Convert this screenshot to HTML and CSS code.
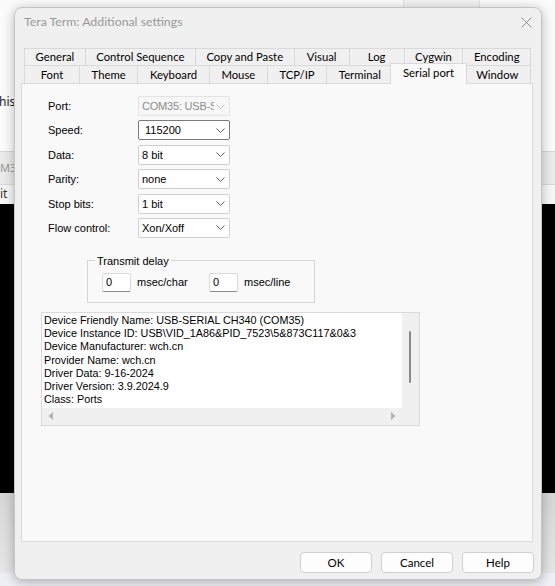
FILE: index.html
```html
<!DOCTYPE html>
<html lang="en">
<head>
    <meta charset="UTF-8">
    <title>Tera Term: Additional settings</title>
    <link rel="stylesheet" href="styles.css">
</head>
<body>
    <div class="backwin">
        <div class="bw-doc">
            <div class="bw-pane"></div>
            <div class="bw-text">his</div>
        </div>
        <div class="bw-tool"><span>M3</span></div>
        <div class="bw-menu"><span>it</span></div>
        <div class="bw-term"></div>
        <div class="bw-foot"></div>
    </div>

    <div class="dialog">
        <div class="titlebar">
            <span class="title">Tera Term: Additional settings</span>
            <svg class="close" width="11" height="11" viewBox="0 0 11 11">
                <path d="M0.5 0.5 L10.5 10.5 M10.5 0.5 L0.5 10.5" stroke="#8c8c8c" stroke-width="1" fill="none"/>
            </svg>
        </div>

        <div class="tabs">
            <div class="tabrow">
                <div class="tab">General</div>
                <div class="tab">Control Sequence</div>
                <div class="tab">Copy and Paste</div>
                <div class="tab">Visual</div>
                <div class="tab">Log</div>
                <div class="tab">Cygwin</div>
                <div class="tab">Encoding</div>
            </div>
            <div class="tabrow front">
                <div class="tab">Font</div>
                <div class="tab">Theme</div>
                <div class="tab">Keyboard</div>
                <div class="tab">Mouse</div>
                <div class="tab">TCP/IP</div>
                <div class="tab">Terminal</div>
                <div class="tab active">Serial port</div>
                <div class="tab">Window</div>
            </div>
        </div>

        <div class="panel">
            <div class="fields">
                <label>Port:</label>
                <div class="combo disabled"><span class="value">COM35: USB-S</span><svg class="chev" width="9" height="5" viewBox="0 0 9 5"><path d="M0.5 0.5 L4.5 4.5 L8.5 0.5" stroke="#c4c4c4" fill="none"/></svg></div>

                <label>Speed:</label>
                <div class="combo focused"><span class="value">115200</span><svg class="chev" width="9" height="5" viewBox="0 0 9 5"><path d="M0.5 0.5 L4.5 4.5 L8.5 0.5" stroke="#5f5f5f" fill="none"/></svg></div>

                <label>Data:</label>
                <div class="combo"><span class="value">8 bit</span><svg class="chev" width="9" height="5" viewBox="0 0 9 5"><path d="M0.5 0.5 L4.5 4.5 L8.5 0.5" stroke="#5f5f5f" fill="none"/></svg></div>

                <label>Parity:</label>
                <div class="combo"><span class="value">none</span><svg class="chev" width="9" height="5" viewBox="0 0 9 5"><path d="M0.5 0.5 L4.5 4.5 L8.5 0.5" stroke="#5f5f5f" fill="none"/></svg></div>

                <label>Stop bits:</label>
                <div class="combo"><span class="value">1 bit</span><svg class="chev" width="9" height="5" viewBox="0 0 9 5"><path d="M0.5 0.5 L4.5 4.5 L8.5 0.5" stroke="#5f5f5f" fill="none"/></svg></div>

                <label>Flow control:</label>
                <div class="combo"><span class="value">Xon/Xoff</span><svg class="chev" width="9" height="5" viewBox="0 0 9 5"><path d="M0.5 0.5 L4.5 4.5 L8.5 0.5" stroke="#5f5f5f" fill="none"/></svg></div>
            </div>

            <fieldset class="delay">
                <legend>Transmit delay</legend>
                <div class="delay-row">
                    <div class="delay-item"><div class="num">0</div><span>msec/char</span></div>
                    <div class="delay-item"><div class="num">0</div><span>msec/line</span></div>
                </div>
            </fieldset>

            <div class="info">
                <div class="info-text">Device Friendly Name: USB-SERIAL CH340 (COM35)
Device Instance ID: USB\VID_1A86&amp;PID_7523\5&amp;873C117&amp;0&amp;3
Device Manufacturer: wch.cn
Provider Name: wch.cn
Driver Data: 9-16-2024
Driver Version: 3.9.2024.9
Class: Ports</div>
                <div class="vscroll"><div class="thumb"></div></div>
                <div class="hscroll">
                    <svg width="6" height="8" viewBox="0 0 6 8"><path d="M5 0 L0.5 4 L5 8 Z" fill="#b3b3b3"/></svg>
                    <svg width="6" height="8" viewBox="0 0 6 8"><path d="M1 0 L5.5 4 L1 8 Z" fill="#b3b3b3"/></svg>
                </div>
                <div class="corner"></div>
            </div>
        </div>

        <div class="buttons">
            <button>OK</button>
            <button>Cancel</button>
            <button>Help</button>
        </div>
    </div>
</body>
</html>
```

FILE: styles.css
```css
body {
    margin: 0;
    width: 555px;
    height: 586px;
    overflow: hidden;
    position: relative;
    background: #ececec;
    font-family: 'Liberation Sans', Arial, sans-serif;
}

/* window behind the dialog */
.backwin {
    position: absolute;
    left: 0;
    top: 0;
    width: 555px;
    height: 586px;
    display: flex;
    flex-direction: column;
}
.bw-doc {
    height: 152px;
    background: #fbfbfb;
    border-bottom: 1px solid #d6d6d6;
    box-sizing: border-box;
}
.bw-pane {
    margin-left: 403px;
    width: 77px;
    height: 8px;
    box-sizing: border-box;
    background: #f3f3f3;
    border-left: 1px solid #e2e2e2;
    border-right: 1px solid #e2e2e2;
}
.bw-text {
    margin-top: 85px;
    margin-left: -1px;
    font-family: 'Noto Sans', sans-serif;
    font-size: 12px;
    color: #1a1a1a;
}
.bw-tool {
    height: 33px;
    background: #ebebeb;
    border-bottom: 1px solid #d9d9d9;
    box-sizing: border-box;
    font-family: 'Noto Sans', sans-serif;
    font-size: 11px;
    color: #9a9a9a;
    line-height: 32px;
}
.bw-menu {
    height: 19px;
    background: #f7f7f7;
    font-family: 'Noto Sans', sans-serif;
    font-size: 12px;
    color: #333;
    line-height: 17px;
}
.bw-term {
    height: 289px;
    background: #000;
}
.bw-foot {
    flex: 1;
    background: linear-gradient(#d6d6d6, #e6e6e6 85%, #eef0f5 87%);
}

/* dialog */
.dialog {
    position: absolute;
    left: 14px;
    top: 7px;
    width: 528px;
    height: 573px;
    box-sizing: border-box;
    padding: 0 8px 0 6px;
    background: #f0f0f0;
    border: 1px solid #c4c4c4;
    border-radius: 8px;
    box-shadow: 0 2px 12px rgba(0,0,0,0.28);
    font-family: Lato, 'Noto Sans', sans-serif;
}
.titlebar {
    height: 40px;
    margin: 0 -8px 0 -6px;
    padding: 6px 9px 0 9px;
    box-sizing: border-box;
    display: flex;
    justify-content: space-between;
    align-items: flex-start;
}
.title {
    font-size: 12.3px;
    line-height: 16px;
    color: #999;
}
.close {
    margin-top: 3px;
}

.tabs {
    padding: 0 2px 0 3px;
    font-size: 11.3px;
}
.tabrow {
    display: flex;
    height: 17px;
}
.tabrow.front {
    height: 18px;
}
.tab {
    flex: 1 1 auto;
    min-width: 56px;
    padding: 0 8px;
    box-sizing: border-box;
    border: 1px solid #d9d9d9;
    border-bottom: none;
    margin-left: -1px;
    background: #f0f0f0;
    text-align: center;
    line-height: 16px;
    white-space: nowrap;
}
.tabrow.front .tab {
    line-height: 17px;
}
.tab:first-child {
    margin-left: 0;
}
.tabrow.front .tab.active {
    position: relative;
    z-index: 1;
    margin: -2px -2px -1px -3px;
    background: #f9f9f9;
    line-height: 17px;
}

.panel {
    height: 459px;
    box-sizing: border-box;
    background: #f9f9f9;
    border: 1px solid #d9d9d9;
    font-family: 'Liberation Sans', Arial, sans-serif;
    font-size: 11px;
    color: #000;
}

.fields {
    display: grid;
    grid-template-columns: 90px 92px;
    grid-template-rows: repeat(6, 20px);
    row-gap: 4.4px;
    margin: 12px 0 0 26px;
}
.fields label {
    align-self: center;
}
.combo {
    display: flex;
    align-items: center;
    gap: 2px;
    box-sizing: border-box;
    padding: 0 4px 0 3px;
    background: #fff;
    border: 1px solid #cfcfcf;
    border-radius: 2px;
}
.combo .value {
    flex: 1;
    min-width: 0;
    overflow: hidden;
    white-space: nowrap;
}
.combo.disabled {
    background: #f7f7f7;
    border-color: #e3e3e3;
    color: #8d8d8d;
    letter-spacing: -0.2px;
}
.combo.focused {
    border-color: #7a7a7a;
    padding-left: 6px;
}
.chev {
    flex: none;
}

.delay {
    margin: 16px 0 0 65px;
    width: 228px;
    box-sizing: border-box;
    padding: 5px 0 10px 14px;
    border: 1px solid #d6d6d6;
}
.delay legend {
    margin-left: -7px;
    padding: 0 2px;
    line-height: 14px;
}
.delay-row {
    display: grid;
    grid-template-columns: 107px auto;
}
.delay-item {
    display: flex;
    align-items: center;
    gap: 6px;
}
.num {
    width: 29px;
    height: 19px;
    box-sizing: border-box;
    padding-left: 3px;
    line-height: 17px;
    background: #fff;
    border: 1px solid #dadada;
    border-bottom-color: #8a8a8a;
    border-radius: 2px;
}

.info {
    margin: 9px 0 0 19px;
    width: 379px;
    height: 114px;
    box-sizing: border-box;
    border: 1px solid #dadada;
    display: grid;
    grid-template-columns: 1fr 17px;
    grid-template-rows: 1fr 17px;
}
.info-text {
    background: #fff;
    padding: 1px 2px;
    font-size: 10.8px;
    white-space: pre;
    line-height: 13.2px;
    overflow: hidden;
}
.vscroll {
    background: #f0f0f0;
    padding: 18px 0 0 7px;
}
.thumb {
    width: 2px;
    height: 52px;
    background: #8a8a8a;
    border-radius: 1px;
}
.hscroll {
    background: #f0f0f0;
    display: flex;
    align-items: center;
    justify-content: space-between;
    padding: 0 6px;
}
.corner {
    background: #f0f0f0;
}

.buttons {
    display: flex;
    justify-content: flex-end;
    gap: 9px;
    margin: 10px -1px 0 0;
}
button {
    width: 72px;
    height: 21px;
    padding: 0;
    background: #fdfdfd;
    border: 1px solid #d0d0d0;
    border-radius: 4px;
    font-family: Lato, 'Noto Sans', sans-serif;
    font-size: 11.5px;
    color: #000;
}
```
